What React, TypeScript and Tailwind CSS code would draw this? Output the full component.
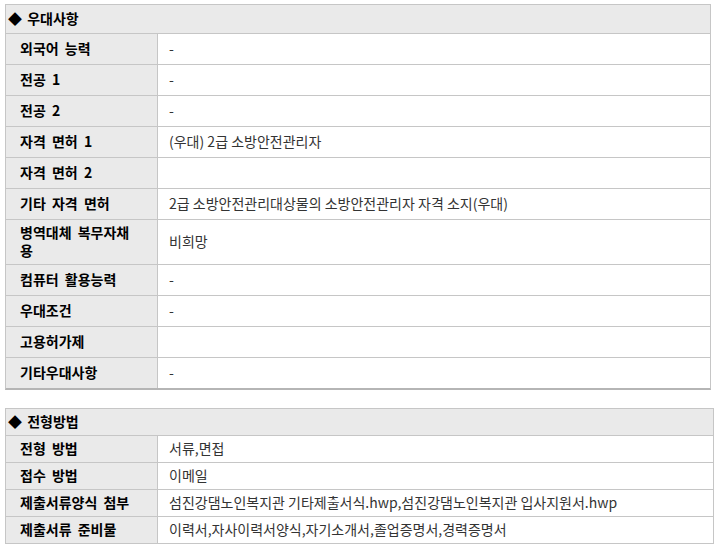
import React from "react";

type Row = { label: string; value: string; tall?: boolean };

const benefits: Row[] = [
  { label: "외국어 능력", value: "-" },
  { label: "전공 1", value: "-" },
  { label: "전공 2", value: "-" },
  { label: "자격 면허 1", value: "(우대) 2급 소방안전관리자" },
  { label: "자격 면허 2", value: "" },
  { label: "기타 자격 면허", value: "2급 소방안전관리대상물의 소방안전관리자 자격 소지(우대)" },
  { label: "병역대체 복무자채용", value: "비희망", tall: true },
  { label: "컴퓨터 활용능력", value: "-" },
  { label: "우대조건", value: "-" },
  { label: "고용허가제", value: "" },
  { label: "기타우대사항", value: "-" },
];

const screening: Row[] = [
  { label: "전형 방법", value: "서류,면접" },
  { label: "접수 방법", value: "이메일" },
  { label: "제출서류양식 첨부", value: "섬진강댐노인복지관 기타제출서식.hwp,섬진강댐노인복지관 입사지원서.hwp" },
  { label: "제출서류 준비물", value: "이력서,자사이력서양식,자기소개서,졸업증명서,경력증명서" },
];

function InfoTable({
  title,
  rows,
  rowH,
  headH,
  last,
  width,
}: {
  title: string;
  rows: Row[];
  rowH: string;
  headH: string;
  last: string;
  width: string;
}) {
  return (
    <div className={`${width} flex flex-col border-x border-t border-[#c6c6c6] ${last}`}>
      {/* section header */}
      <div
        className={`${headH} flex items-center bg-[#eaeaea] pb-[2px] pl-[2px] text-[14px] font-bold text-black [word-spacing:2px]`}
      >
        ◆ {title}
      </div>
      {rows.map((r) => (
        <div
          key={r.label}
          className={`flex border-t border-[#c6c6c6] ${r.tall ? "h-[45px]" : rowH}`}
        >
          <div className="flex w-[152px] shrink-0 items-center border-r border-[#c6c6c6] bg-[#eaeaea] pb-[2px] pl-[14px] pr-[22px] text-[14px] font-bold leading-[18px] text-black [word-spacing:3px]">
            {r.label}
          </div>
          <div className="flex flex-1 items-center pb-[2px] pl-[11px] text-[14px] text-[#333]">
            {r.value}
          </div>
        </div>
      ))}
    </div>
  );
}

export default function App() {
  return (
    <div className="min-h-[551px] w-[722px] bg-white pl-[5px] pt-[4px] [font-family:'Noto_Sans_CJK_KR','Noto_Sans',sans-serif]">
      <InfoTable
        title="우대사항"
        rows={benefits}
        headH="h-[28px]"
        rowH="h-[31px]"
        last="border-b-2 border-b-[#b5b5b5]"
        width="w-[706px]"
      />
      <div className="h-[18px]" />
      <InfoTable
        title="전형방법"
        rows={screening}
        headH="h-[26px]"
        rowH="h-[27px]"
        last="border-b border-b-[#c6c6c6]"
        width="w-[709px]"
      />
    </div>
  );
}
